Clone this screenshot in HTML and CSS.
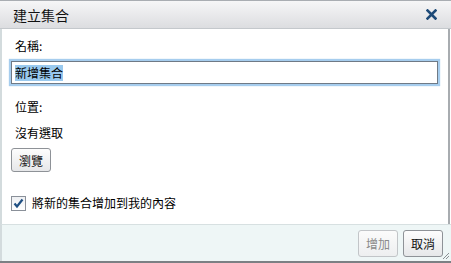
FILE: index.html
```html
<!DOCTYPE html>
<html lang="zh-Hant">
<head>
    <meta charset="UTF-8">
    <title>建立集合</title>
    <link rel="stylesheet" href="styles.css">
</head>
<body>
<div class="dialog">
    <div class="titlebar">
        <span class="title">建立集合</span>
        <svg class="close" width="11" height="11" viewBox="0 0 11 11">
            <path d="M1.5 1.5 L9.5 9.5 M9.5 1.5 L1.5 9.5" stroke="#1d4a78" stroke-width="2.6" stroke-linecap="square"/>
        </svg>
    </div>
    <div class="content">
        <div class="label first">名稱:</div>
        <div class="textbox"><span class="selected">新增集合</span></div>
        <div class="label location">位置:</div>
        <div class="label none">沒有選取</div>
        <button class="btn browse">瀏覽</button>
        <label class="check-row">
            <span class="checkbox">
                <svg width="11" height="11" viewBox="0 0 11 11">
                    <path d="M1.5 5.5 L4 8.5 L9.5 1.5" fill="none" stroke="#1f4f82" stroke-width="2.2"/>
                </svg>
            </span>
            將新的集合增加到我的內容
        </label>
    </div>
    <div class="footer">
        <button class="btn" disabled>增加</button>
        <button class="btn">取消</button>
        <svg class="grip" width="8" height="8" viewBox="0 0 8 8">
            <path d="M7 1 L1 7 M7 4 L4 7 M7 7 L7 7" stroke="#8a8f94" stroke-width="1"/>
        </svg>
    </div>
</div>
</body>
</html>
```

FILE: styles.css
```css
body {
    margin: 0;
    background: #ffffff;
    font-family: "Noto Sans CJK TC", "Liberation Sans", sans-serif;
    font-size: 12px;
    color: #000;
}
.dialog {
    width: 451px;
    height: 263px;
    box-sizing: border-box;
    display: flex;
    flex-direction: column;
    border-top: 1px solid #a9adb2;
    border-bottom: 2px solid #7c8084;
}
.titlebar {
    height: 27px;
    flex: none;
    display: flex;
    align-items: center;
    justify-content: space-between;
    padding: 0 14px 0 13px;
    background: linear-gradient(#f6f6f7, #dcdde0);
    border-bottom: 1px solid #c4c8cc;
}
.title {
    font-size: 14px;
    color: #111;
}
.close {
    display: block;
}
.content {
    flex: 1;
    padding: 0 10px 0 11px;
    border-left: 2px solid #d3dbdd;
    border-right: 2px solid #a8acb0;
    margin-right: 1px;
}
.label {
    line-height: 16px;
    padding-left: 2px;
}
.label.first {
    margin-top: 9px;
}
.label.location {
    margin-top: 15px;
}
.label.none {
    margin-top: 10px;
}
.textbox {
    margin-top: 7px;
    margin-left: -2px;
    height: 21px;
    border: 1px solid #6f7a86;
    box-shadow: 0 0 1px 2px #a6cdee;
    display: flex;
    align-items: center;
    padding-left: 3px;
    font-size: 12px;
}
.selected {
    background: #99c9ee;
    line-height: 16px;
}
.btn {
    font-family: "Noto Sans CJK TC", "Liberation Sans", sans-serif;
    font-size: 12px;
    color: #111;
    height: 27px;
    width: 40px;
    padding: 0;
    border: 1px solid #8e9297;
    border-radius: 3px;
    background: linear-gradient(#fdfdfd, #e6e7e9);
}
.btn:disabled {
    color: #8a8a8a;
    border-color: #c2c5c8;
    background: linear-gradient(#fbfbfb, #eeeff0);
}
.browse {
    display: block;
    margin-top: 7px;
    margin-left: -2px;
    height: 24px;
}
.check-row {
    display: flex;
    align-items: center;
    margin-top: 23px;
    margin-left: -2px;
    line-height: 16px;
}
.checkbox {
    width: 13px;
    height: 13px;
    border: 1px solid #8a9099;
    background: linear-gradient(#eef0f3, #ffffff);
    display: flex;
    align-items: center;
    justify-content: center;
    margin-right: 6px;
}
.footer {
    flex: none;
    height: 36px;
    position: relative;
    display: flex;
    justify-content: flex-end;
    align-items: center;
    gap: 5px;
    padding: 0 8px;
    background: #eef6f6;
    border-top: 1px solid #d7e0e1;
    border-left: 2px solid #d3dbdd;
}
.grip {
    position: absolute;
    right: 1px;
    bottom: 1px;
}
```
